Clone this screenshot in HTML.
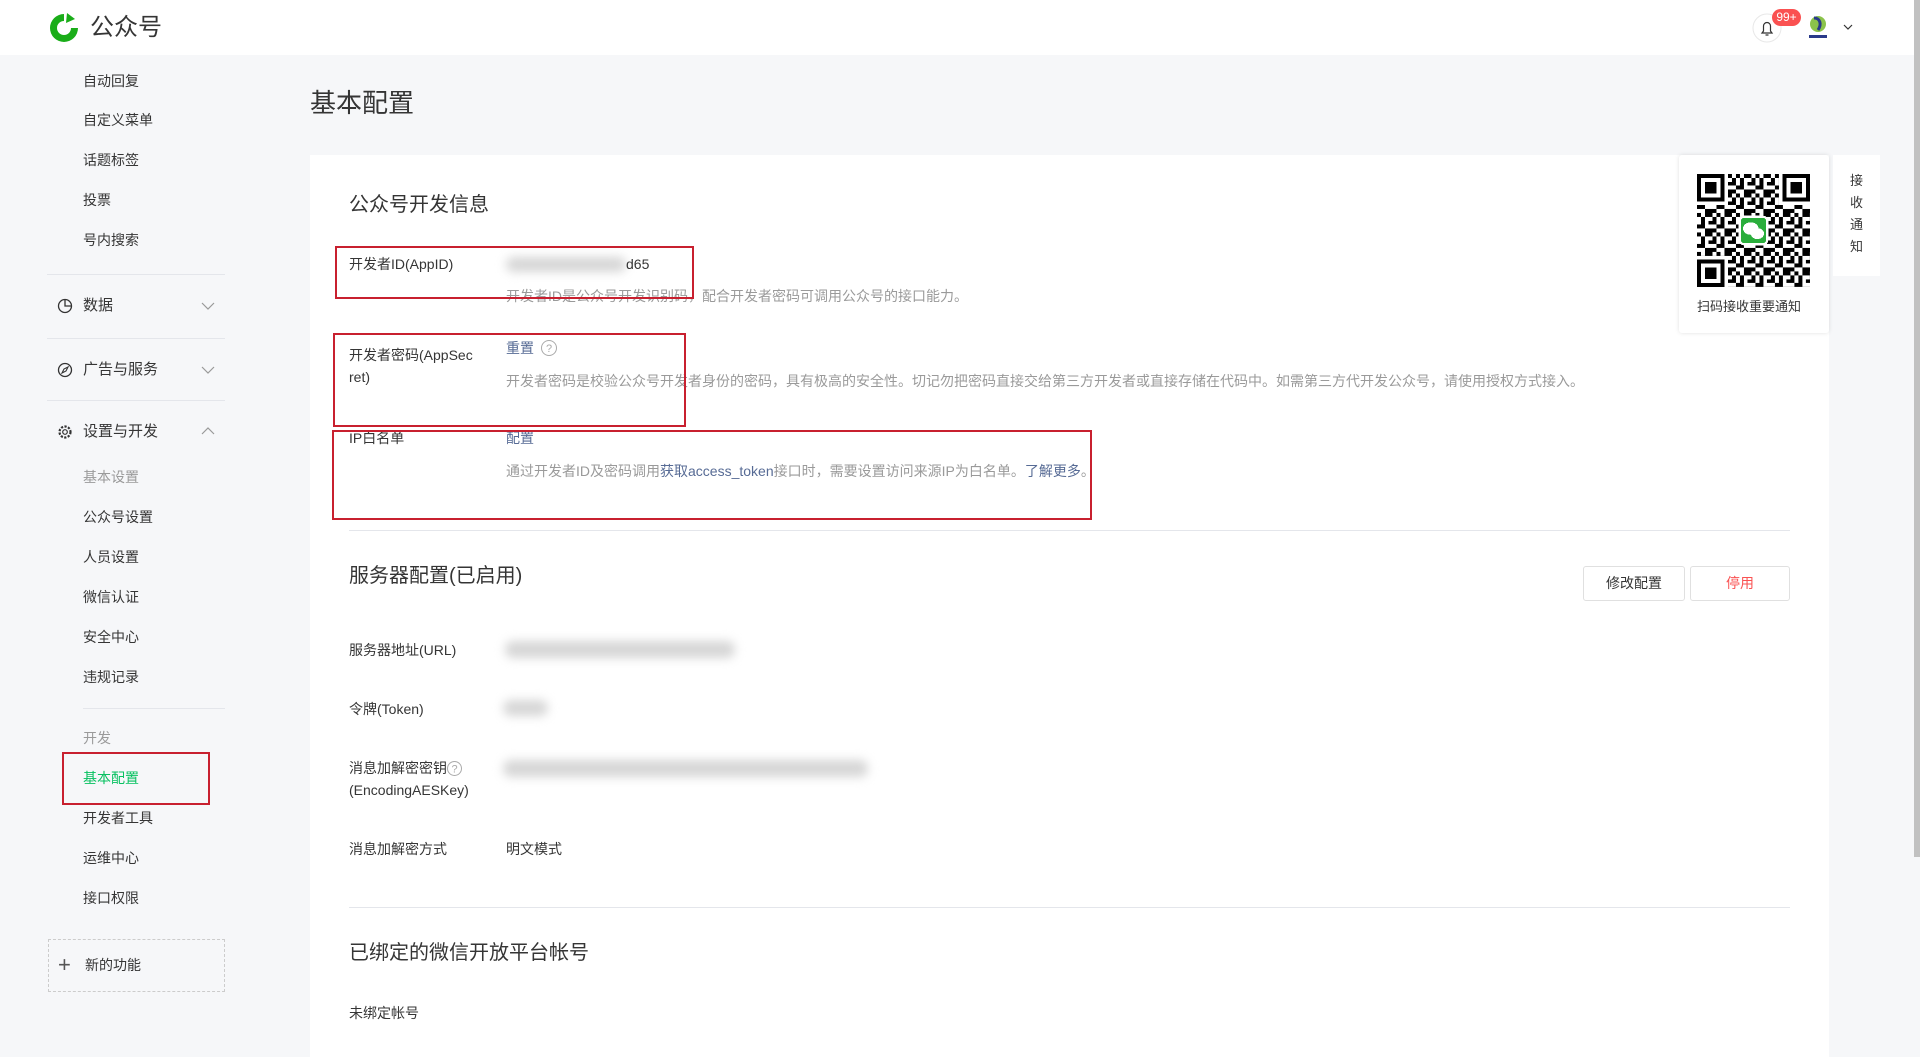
<!DOCTYPE html>
<html><head><meta charset="utf-8"><style>
*{margin:0;padding:0;box-sizing:border-box}
body{width:1920px;height:1057px;overflow:hidden;background:#f6f7f9;font-family:"Liberation Sans","Noto Sans CJK SC",sans-serif;color:#353535;position:relative}
.t{position:absolute;line-height:20px;white-space:nowrap;font-size:14px}
.hdr{position:absolute;left:0;top:0;width:1914px;height:55px;background:#fff}
.side{color:#353535}
.sub{color:#9a9a9a}
.div{position:absolute;height:1px;background:#e4e6eb}
.card{position:absolute;left:310px;top:155px;width:1519px;height:902px;background:#fff}
.red{position:absolute;border:2px solid #c8202f}
.desc{color:#9a9a9a;font-size:14px}
.link{color:#576b95}
.blur{position:absolute;background:#d6d6d6;filter:blur(5px);border-radius:8px}
.h2{font-size:20px}
.btn{position:absolute;height:35px;border:1px solid #e0e0e0;background:#fff;border-radius:3px;font-size:14px;line-height:33px;text-align:center}
</style></head><body>
<div class="hdr">
<svg style="position:absolute;left:47px;top:11px" width="34" height="34" viewBox="0 0 34 34"><path d="M17 3a14 14 0 1 0 14 14h-7a7 7 0 1 1-7-7z" fill="#1aad19"/><path d="M20 2l8 6-9 4z" fill="#1aad19"/><circle cx="17" cy="17" r="5" fill="#fff"/></svg>
<div class="t" style="left:90px;top:13px;font-size:24px;line-height:30px;color:#353535">公众号</div>
<svg style="position:absolute;left:1752px;top:13px" width="30" height="30" viewBox="0 0 30 30"><circle cx="15" cy="15" r="14" fill="#fff" stroke="#e8e8e8"/><path d="M10 20h10l-1.5-2v-5a3.5 3.5 0 0 0-7 0v5zM13.5 22h3" fill="none" stroke="#333" stroke-width="1.2"/></svg>
<div style="position:absolute;left:1772px;top:9px;width:29px;height:17px;border-radius:9px;background:#fa5151;color:#fff;font-size:12px;line-height:17px;text-align:center">99+</div>
<svg style="position:absolute;left:1806px;top:14px" width="24" height="26" viewBox="0 0 24 26"><circle cx="12" cy="10" r="8" fill="#8bc34a"/><path d="M8 4c6 0 8 6 4 12" stroke="#2a3a8a" stroke-width="3" fill="none"/><rect x="3" y="21" width="18" height="3" fill="#2a3a8a"/></svg>
<svg style="position:absolute;left:1843px;top:24px" width="10" height="7" viewBox="0 0 10 7"><path d="M1 1l4 4 4-4" fill="none" stroke="#333" stroke-width="1.2"/></svg>
</div>
<div style="position:absolute;left:1914px;top:0;width:6px;height:857px;background:#c1c1c1"></div>

<div class="t side" style="left:83px;top:71px">自动回复</div>
<div class="t side" style="left:83px;top:110px">自定义菜单</div>
<div class="t side" style="left:83px;top:150px">话题标签</div>
<div class="t side" style="left:83px;top:190px">投票</div>
<div class="t side" style="left:83px;top:230px">号内搜索</div>
<div class="div" style="left:47px;top:274px;width:178px"></div>
<svg style="position:absolute;left:57px;top:298px" width="16" height="16" viewBox="0 0 16 16"><circle cx="8" cy="8" r="6.5" fill="none" stroke="#333" stroke-width="1.3"/><path d="M8 1.5V8h6.5" fill="none" stroke="#333" stroke-width="1.3"/></svg>
<div class="t side" style="left:83px;top:296px;font-size:15px">数据</div>
<svg style="position:absolute;left:201px;top:302px" width="14" height="8"><path d="M1 1l6 6 6-6" fill="none" stroke="#999" stroke-width="1.2"/></svg>
<div class="div" style="left:47px;top:338px;width:178px"></div>
<svg style="position:absolute;left:57px;top:362px" width="16" height="16" viewBox="0 0 16 16"><circle cx="8" cy="8" r="6.5" fill="none" stroke="#333" stroke-width="1.3"/><path d="M11 5l-2 4-4 2 2-4z" fill="none" stroke="#333" stroke-width="1.1"/></svg>
<div class="t side" style="left:83px;top:360px;font-size:15px">广告与服务</div>
<svg style="position:absolute;left:201px;top:366px" width="14" height="8"><path d="M1 1l6 6 6-6" fill="none" stroke="#999" stroke-width="1.2"/></svg>
<div class="div" style="left:47px;top:400px;width:178px"></div>
<svg style="position:absolute;left:57px;top:424px" width="16" height="16" viewBox="0 0 16 16"><circle cx="8" cy="8" r="5.5" fill="none" stroke="#333" stroke-width="2.2" stroke-dasharray="2.2 1.4"/><circle cx="8" cy="8" r="2.3" fill="none" stroke="#333" stroke-width="1.2"/></svg>
<div class="t side" style="left:83px;top:422px;font-size:15px">设置与开发</div>
<svg style="position:absolute;left:201px;top:427px" width="14" height="8"><path d="M1 7l6-6 6 6" fill="none" stroke="#999" stroke-width="1.2"/></svg>
<div class="t sub" style="left:83px;top:467px">基本设置</div>
<div class="t side" style="left:83px;top:507px">公众号设置</div>
<div class="t side" style="left:83px;top:547px">人员设置</div>
<div class="t side" style="left:83px;top:587px">微信认证</div>
<div class="t side" style="left:83px;top:627px">安全中心</div>
<div class="t side" style="left:83px;top:667px">违规记录</div>
<div class="div" style="left:83px;top:708px;width:142px"></div>
<div class="t sub" style="left:83px;top:728px">开发</div>
<div class="t" style="left:83px;top:768px;color:#07c160">基本配置</div>
<div class="red" style="left:62px;top:752px;width:148px;height:53px"></div>
<div class="t side" style="left:83px;top:808px">开发者工具</div>
<div class="t side" style="left:83px;top:848px">运维中心</div>
<div class="t side" style="left:83px;top:888px">接口权限</div>
<div style="position:absolute;left:48px;top:939px;width:177px;height:53px;border:1px dashed #ccc"></div>
<div class="t" style="left:58px;top:953px;font-size:22px;line-height:24px;color:#555">+</div>
<div class="t side" style="left:85px;top:955px">新的功能</div>

<div class="t" style="left:310px;top:86px;font-size:26px;line-height:34px">基本配置</div>

<div class="card"></div>
<div class="t h2" style="left:349px;top:192px;line-height:26px">公众号开发信息</div>
<div class="t" style="left:349px;top:254px">开发者ID(AppID)</div>
<div class="blur" style="left:506px;top:257px;width:120px;height:15px"></div>
<div class="t" style="left:626px;top:254px">d65</div>
<div class="t desc" style="left:506px;top:286px">开发者ID是公众号开发识别码，配合开发者密码可调用公众号的接口能力。</div>
<div class="red" style="left:335px;top:246px;width:359px;height:53px"></div>

<div class="t" style="left:349px;top:345px">开发者密码(AppSec</div>
<div class="t" style="left:349px;top:367px">ret)</div>
<div class="t link" style="left:506px;top:338px">重置</div>
<svg style="position:absolute;left:540px;top:339px" width="18" height="18"><circle cx="9" cy="9" r="7.5" fill="none" stroke="#aaa"/><text x="9" y="13" font-size="11" text-anchor="middle" fill="#aaa" font-family="Liberation Sans">?</text></svg>
<div class="t desc" style="left:506px;top:371px">开发者密码是校验公众号开发者身份的密码，具有极高的安全性。切记勿把密码直接交给第三方开发者或直接存储在代码中。如需第三方代开发公众号，请使用授权方式接入。</div>
<div class="red" style="left:333px;top:333px;width:353px;height:94px"></div>

<div class="t" style="left:349px;top:428px">IP白名单</div>
<div class="t link" style="left:506px;top:428px">配置</div>
<div class="t desc" style="left:506px;top:461px">通过开发者ID及密码调用<span class="link">获取access_token</span>接口时，需要设置访问来源IP为白名单。<span class="link">了解更多</span>。</div>
<div class="red" style="left:332px;top:430px;width:760px;height:90px"></div>
<div class="div" style="left:349px;top:530px;width:1441px"></div>

<div class="t h2" style="left:349px;top:563px;line-height:26px">服务器配置(已启用)</div>
<div class="btn" style="left:1583px;top:566px;width:102px">修改配置</div>
<div class="btn" style="left:1690px;top:566px;width:100px;color:#fa5151">停用</div>
<div class="t" style="left:349px;top:640px">服务器地址(URL)</div>
<div class="blur" style="left:505px;top:641px;width:230px;height:17px"></div>
<div class="t" style="left:349px;top:699px">令牌(Token)</div>
<div class="blur" style="left:503px;top:700px;width:45px;height:16px"></div>
<div class="t" style="left:349px;top:758px">消息加解密密钥</div>
<svg style="position:absolute;left:446px;top:760px" width="17" height="17"><circle cx="8.5" cy="8.5" r="7" fill="none" stroke="#aaa"/><text x="8.5" y="12.5" font-size="11" text-anchor="middle" fill="#aaa" font-family="Liberation Sans">?</text></svg>
<div class="t" style="left:349px;top:780px">(EncodingAESKey)</div>
<div class="blur" style="left:503px;top:760px;width:365px;height:17px"></div>
<div class="t" style="left:349px;top:839px">消息加解密方式</div>
<div class="t" style="left:506px;top:839px">明文模式</div>
<div class="div" style="left:349px;top:907px;width:1441px"></div>
<div class="t h2" style="left:349px;top:940px;line-height:26px">已绑定的微信开放平台帐号</div>
<div class="t" style="left:349px;top:1003px">未绑定帐号</div>

<div style="position:absolute;left:1679px;top:155px;width:150px;height:178px;background:#fff;box-shadow:0 0 4px rgba(0,0,0,.12);border-radius:3px"></div>
<svg style="position:absolute;left:1697px;top:174px" width="113" height="113" viewBox="0 0 29 29" shape-rendering="crispEdges">
<defs><pattern id="q" width="5" height="5" patternUnits="userSpaceOnUse"><rect width="1" height="1"/><rect x="2" y="0" width="2" height="1"/><rect x="1" y="1" width="1" height="2"/><rect x="3" y="2" width="1" height="1"/><rect x="0" y="3" width="2" height="1"/><rect x="2" y="4" width="3" height="1"/><rect x="4" y="1" width="1" height="2"/></pattern></defs>
<rect width="29" height="29" fill="url(#q)"/>
<g fill="#fff"><rect width="8" height="8"/><rect x="21" width="8" height="8"/><rect y="21" width="8" height="8"/></g>
<g fill="none" stroke="#000"><rect x=".5" y=".5" width="6" height="6"/><rect x="22.5" y=".5" width="6" height="6"/><rect x=".5" y="22.5" width="6" height="6"/></g>
<rect x="2" y="2" width="3" height="3"/><rect x="24" y="2" width="3" height="3"/><rect x="2" y="24" width="3" height="3"/>
<rect x="11" y="11" width="7" height="7" rx="1" fill="#2aae3c" stroke="#fff" stroke-width=".6"/>
<ellipse cx="13.8" cy="14" rx="2" ry="1.6" fill="#fff"/><ellipse cx="15.5" cy="15.3" rx="1.7" ry="1.4" fill="#fff"/>
</svg>
<div class="t" style="left:1697px;top:297px;font-size:13px;color:#353535">扫码接收重要通知</div>
<div style="position:absolute;left:1833px;top:155px;width:47px;height:121px;background:#fff;font-size:13px;line-height:22px;text-align:center;padding-top:15px;color:#353535">接<br>收<br>通<br>知</div>
</body></html>
